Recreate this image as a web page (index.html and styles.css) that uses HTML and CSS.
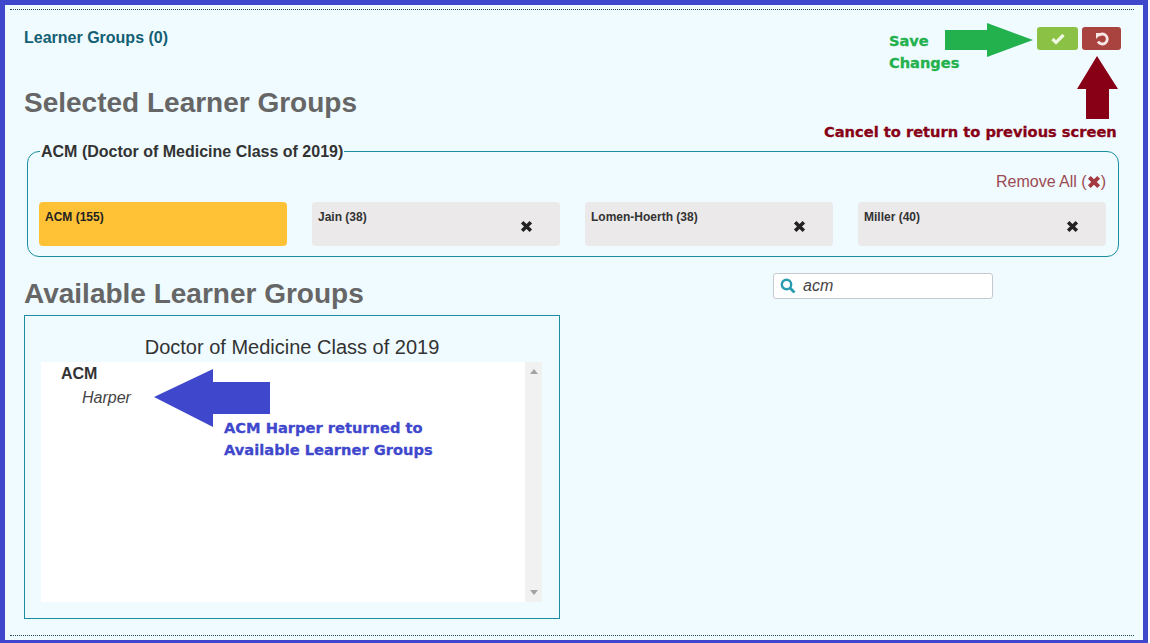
FILE: index.html
```html
<!DOCTYPE html>
<html lang="en">

<head>
    <meta charset="UTF-8">
    <title>Learner Groups</title>
    <link rel="stylesheet" href="styles.css">
</head>

<body>
    <div class="frame">
        <div class="panel">
            <div class="top-row">
                <a class="count-link">Learner Groups (0)</a>
                <div class="actions">
                    <button class="btn btn-save" aria-label="Save">
                        <svg viewBox="0 0 14 12" width="14" height="12"><path d="M1.5 6 L5 9.5 L12.5 2" fill="none" stroke="#eef7df" stroke-width="3.2"/></svg>
                    </button>
                    <button class="btn btn-cancel" aria-label="Cancel">
                        <svg viewBox="0 0 14 14" width="14" height="14"><path d="M3.6 3.6 A5 5 0 1 1 3 9.6" fill="none" stroke="#f7e6e4" stroke-width="2.8"/><path d="M1 1 L7 1 L1 7 Z" fill="#f7e6e4"/></svg>
                    </button>
                </div>
            </div>

            <h2 class="selected-title">Selected Learner Groups</h2>

            <fieldset class="cohort">
                <legend>ACM (Doctor of Medicine Class of 2019)</legend>
                <div class="remove-all">Remove All (<svg class="x-icon" viewBox="0 0 12 12" width="14" height="14"><path d="M2 2 L10 10 M10 2 L2 10" stroke="#a33a3f" stroke-width="3.4"/></svg>)</div>
                <div class="tiles">
                    <div class="tile tile-active">ACM (155)</div>
                    <div class="tile">Jain (38)
                        <svg class="x-icon tile-x" viewBox="0 0 12 12" width="13" height="13"><path d="M2 2 L10 10 M10 2 L2 10" stroke="#222" stroke-width="3.2"/></svg>
                    </div>
                    <div class="tile">Lomen-Hoerth (38)
                        <svg class="x-icon tile-x" viewBox="0 0 12 12" width="13" height="13"><path d="M2 2 L10 10 M10 2 L2 10" stroke="#222" stroke-width="3.2"/></svg>
                    </div>
                    <div class="tile">Miller (40)
                        <svg class="x-icon tile-x" viewBox="0 0 12 12" width="13" height="13"><path d="M2 2 L10 10 M10 2 L2 10" stroke="#222" stroke-width="3.2"/></svg>
                    </div>
                </div>
            </fieldset>

            <div class="available-row">
                <h2 class="available-title">Available Learner Groups</h2>
                <div class="search">
                    <svg viewBox="0 0 16 16" width="16" height="16"><circle cx="6.5" cy="6.5" r="4.7" fill="none" stroke="#2a9bb0" stroke-width="2.4"/><path d="M10 10 L14.5 14.5" stroke="#2a9bb0" stroke-width="2.8"/></svg>
                    <span>acm</span>
                </div>
            </div>

            <div class="available-box">
                <div class="box-title">Doctor of Medicine Class of 2019</div>
                <div class="list">
                    <div class="list-items">
                        <div class="list-group">ACM</div>
                        <div class="list-item">Harper</div>
                    </div>
                    <div class="scrollbar">
                        <span class="arrow-up"></span>
                        <span class="arrow-down"></span>
                    </div>
                </div>
            </div>
        </div>

        <!-- annotation layer drawn over the screenshot -->
        <svg class="arrows" viewBox="0 0 1150 643" width="1150" height="643">
            <path d="M945 30 H987 V23 L1033 40 L987 57 V50 H945 Z" fill="#22b14c"/>
            <path d="M1097 56 L1118 89 H1109 V119 H1086 V89 H1077 Z" fill="#880015"/>
            <path d="M154 397 L213 369 V382 H270 V414 H213 V427 Z" fill="#3f48cc"/>
        </svg>
        <div class="note note-save">Save<br>Changes</div>
        <div class="note note-cancel">Cancel to return to previous screen</div>
        <div class="note note-returned">ACM Harper returned to<br>Available Learner Groups</div>
    </div>
</body>

</html>
```

FILE: styles.css
```css
* {
    box-sizing: border-box;
}

body {
    margin: 0;
    background: #fff;
    font-family: "Liberation Sans", Arial, sans-serif;
    color: #333;
    overflow: hidden;
}

.frame {
    position: relative;
    width: 1148px;
    height: 643px;
    border: 5px solid #3f48cc;
    border-bottom-width: 3px;
    background: #effbff;
    padding: 4px 9px 4px 5px;
}

.panel {
    height: 100%;
    border-top: 1px dotted #1d4a55;
    border-bottom: 1px dotted #1d4a55;
    padding: 13px 0 0 14px;
}

.top-row {
    display: flex;
    justify-content: space-between;
    height: 40px;
}

.count-link {
    margin-top: 6px;
    font-size: 16px;
    font-weight: bold;
    color: #145f73;
}

.actions {
    display: flex;
    gap: 4px;
    padding-top: 4px;
    margin-right: 13px;
}

.btn {
    display: flex;
    align-items: center;
    justify-content: center;
    height: 23px;
    padding: 0;
    border: none;
    border-radius: 3px;
}

.btn-save {
    width: 41px;
    background: #8bc145;
}

.btn-cancel {
    width: 39px;
    background: #a8433f;
}

h2 {
    margin: 0;
    font-size: 28px;
    font-weight: bold;
    color: #666;
}

.selected-title {
    margin-top: 25px;
    line-height: 30px;
}

.cohort {
    margin: 23px 15px 0 3px;
    height: 116px;
    min-width: 0;
    padding: 0 11px;
    border: 1px solid #1a8f9c;
    border-radius: 12px;
}

.cohort legend {
    margin-left: 1px;
    padding: 2px 1px 0;
    font-size: 16px;
    font-weight: bold;
    color: #333;
}

.remove-all {
    margin: 9px 1px 0 0;
    height: 24px;
    text-align: right;
    font-size: 16px;
    line-height: 24px;
    color: #9c4a52;
}

.remove-all .x-icon {
    vertical-align: -2px;
}

.tiles {
    display: grid;
    grid-template-columns: repeat(4, 248px);
    gap: 25px;
    margin-top: 8px;
}

.tile {
    position: relative;
    height: 44px;
    padding: 8px 6px;
    border-radius: 4px;
    background: #ebe9ea;
    font-size: 12px;
    font-weight: bold;
    color: #333;
}

.tile-active {
    background: #ffc136;
    color: #222;
}

.tile-x {
    position: absolute;
    top: 18px;
    right: 27px;
}

.available-row {
    display: flex;
    height: 58px;
    padding-top: 16px;
}

.available-title {
    width: 749px;
    margin-top: 6px;
    line-height: 30px;
}

.search {
    display: flex;
    align-items: center;
    gap: 7px;
    width: 220px;
    height: 26px;
    padding-left: 6px;
    border: 1px solid #c6c9cc;
    border-radius: 3px;
    background: #fff;
    font-size: 16px;
    font-style: italic;
    color: #444;
}

.available-box {
    width: 536px;
    height: 304px;
    padding: 0 17px 0 16px;
    border: 1px solid #1a8f9c;
}

.box-title {
    height: 46px;
    padding: 20px 0 0 1px;
    text-align: center;
    font-size: 20px;
    line-height: 23px;
    color: #333;
}

.list {
    display: flex;
    height: 240px;
    background: #fff;
}

.list-items {
    flex: 1;
    padding: 2px 0 0 20px;
    font-size: 16px;
}

.list-group {
    line-height: 20px;
    font-weight: bold;
}

.list-item {
    margin-top: 4px;
    padding-left: 21px;
    line-height: 20px;
    font-style: italic;
    color: #444;
}

.scrollbar {
    display: flex;
    flex-direction: column;
    justify-content: space-between;
    align-items: center;
    width: 17px;
    padding: 7px 0;
    background: #f1f1f1;
}

.arrow-up,
.arrow-down {
    width: 0;
    height: 0;
    border-left: 4px solid transparent;
    border-right: 4px solid transparent;
}

.arrow-up {
    border-bottom: 5px solid #a3a3a3;
}

.arrow-down {
    border-top: 5px solid #a3a3a3;
}

.arrows {
    position: absolute;
    left: -5px;
    top: -5px;
    pointer-events: none;
}

.note {
    position: absolute;
    font-family: "DejaVu Sans", Verdana, sans-serif;
    font-weight: bold;
    white-space: nowrap;
    -webkit-text-stroke: 0.3px currentColor;
}

.note-save {
    left: 884px;
    top: 25px;
    font-size: 14.6px;
    line-height: 22px;
    color: #22b14c;
}

.note-cancel {
    left: 819px;
    top: 118px;
    font-size: 14.65px;
    line-height: 18px;
    color: #880015;
}

.note-returned {
    left: 219px;
    top: 412px;
    font-size: 14.65px;
    line-height: 22px;
    color: #3f48cc;
}
```
